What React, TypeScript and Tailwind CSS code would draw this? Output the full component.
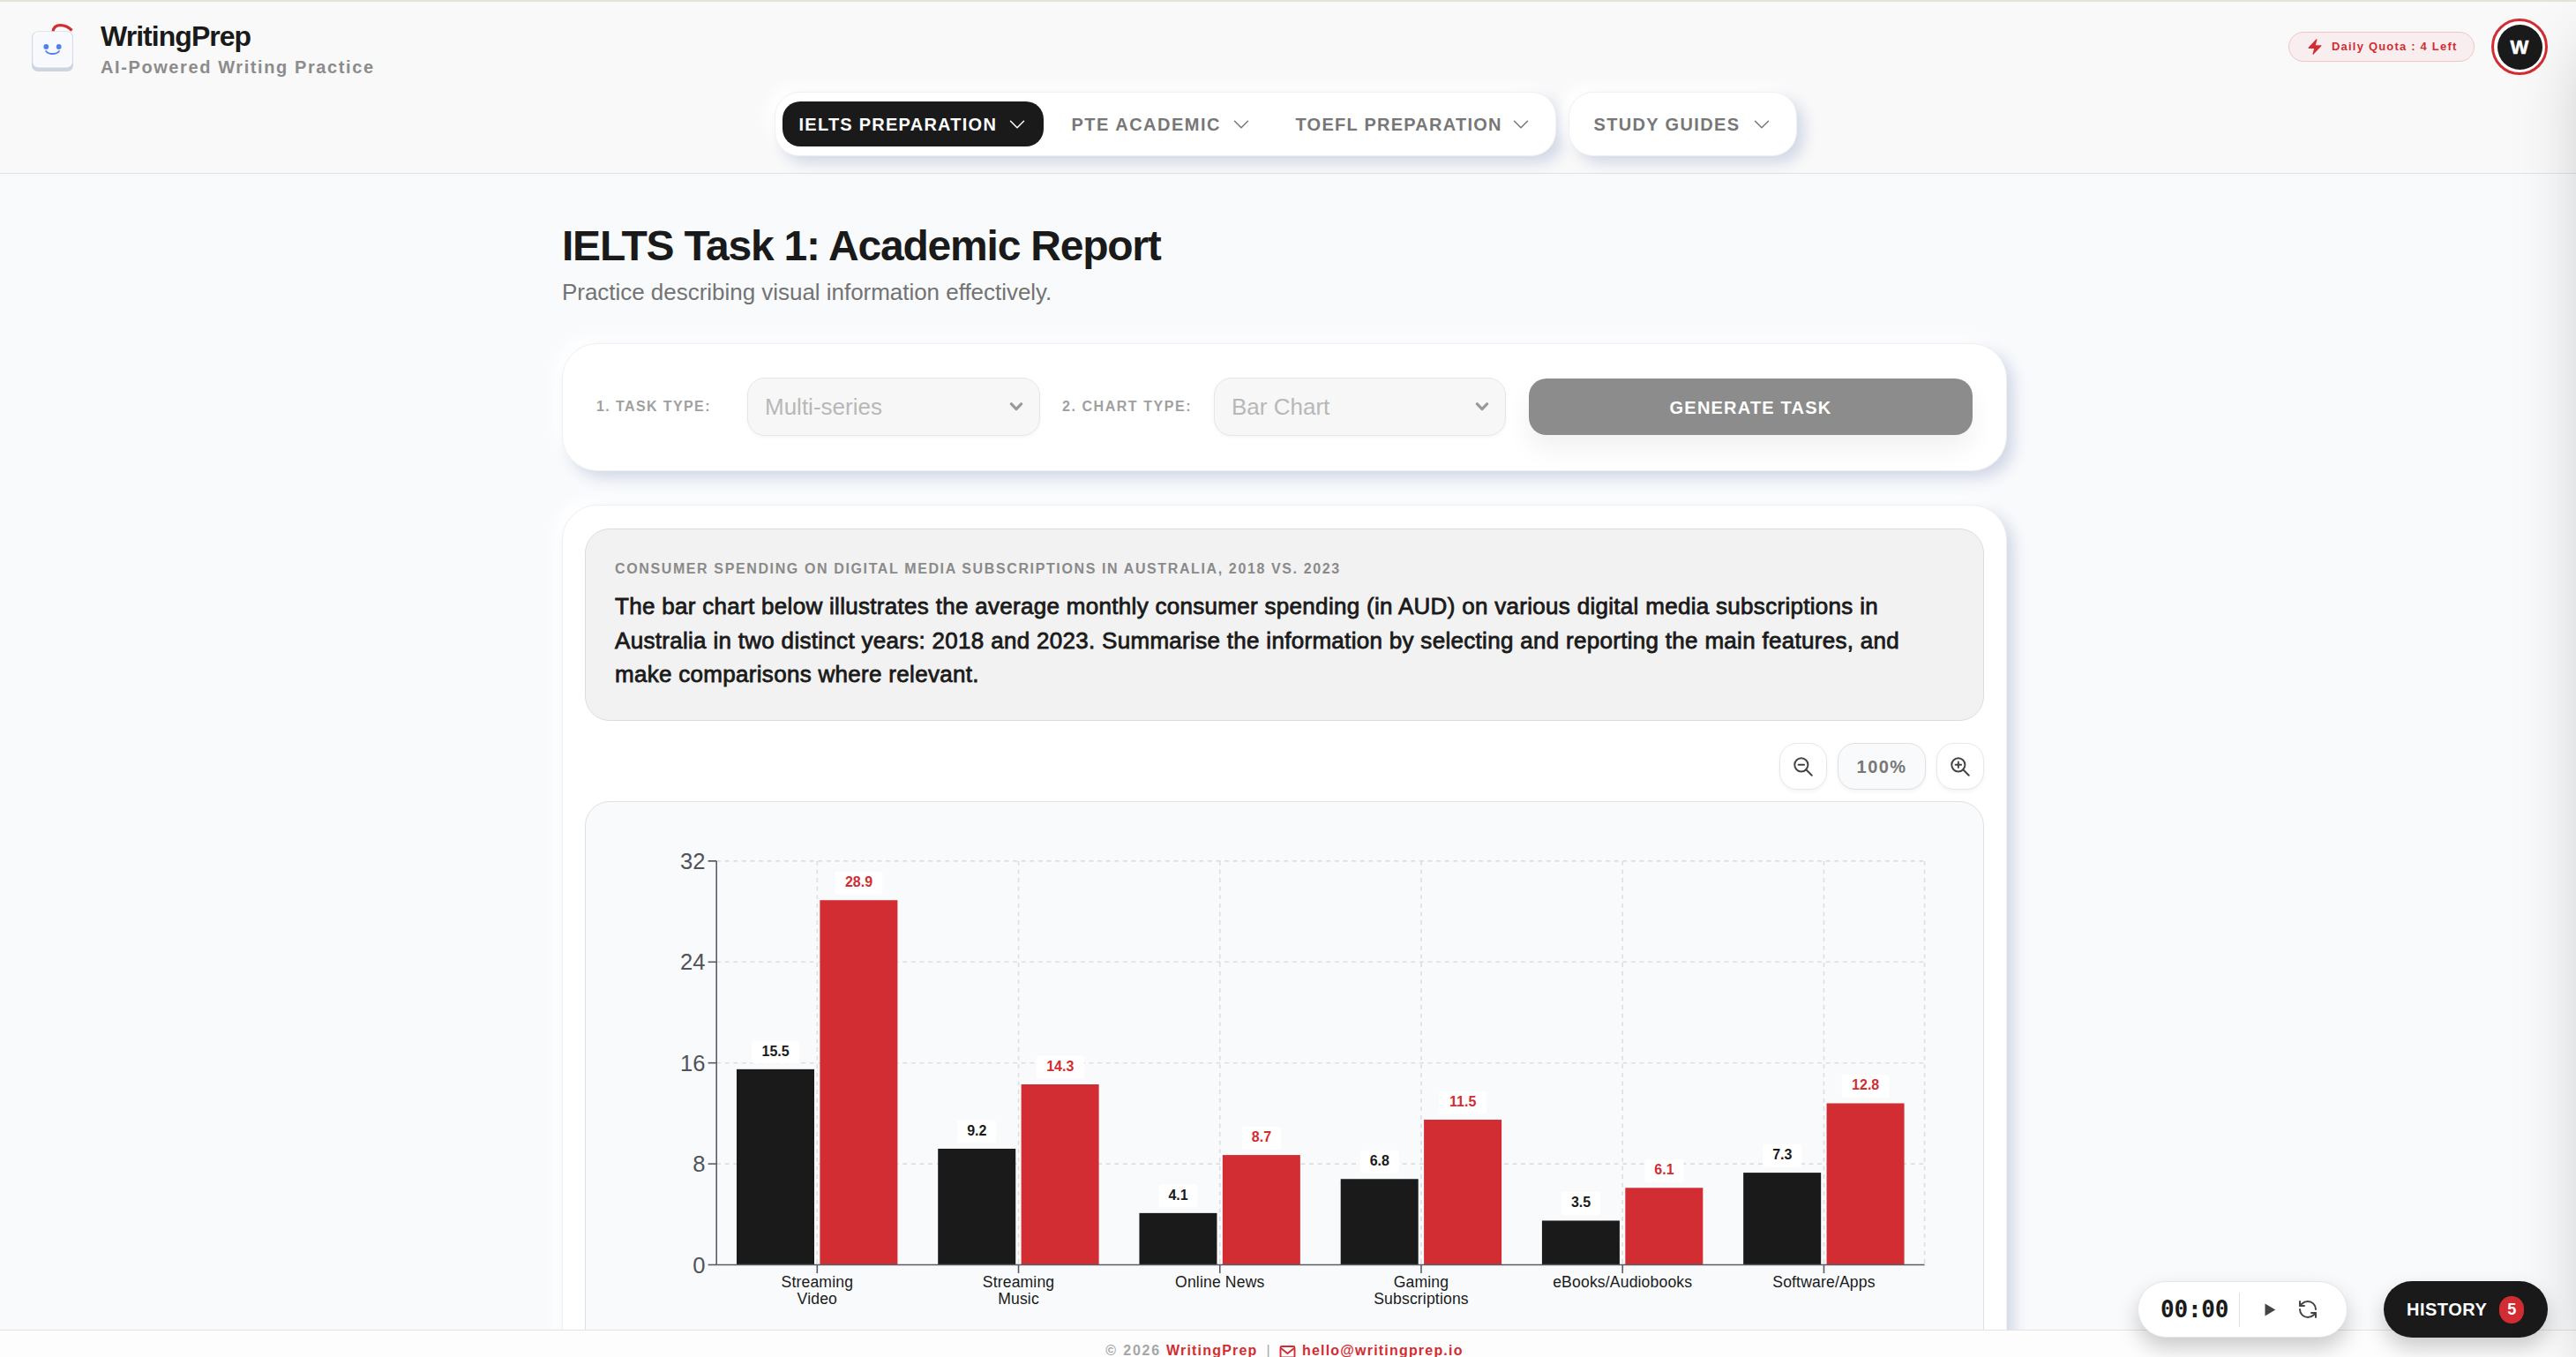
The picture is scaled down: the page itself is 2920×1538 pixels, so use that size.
import { RefreshCcw } from 'lucide-react';
import type { ReactNode } from 'react';

const chartData = [
    { label: ['Streaming', 'Video'], y2018: 15.5, y2023: 28.9 },
    { label: ['Streaming', 'Music'], y2018: 9.2, y2023: 14.3 },
    { label: ['Online News'], y2018: 4.1, y2023: 8.7 },
    { label: ['Gaming', 'Subscriptions'], y2018: 6.8, y2023: 11.5 },
    { label: ['eBooks/Audiobooks'], y2018: 3.5, y2023: 6.1 },
    { label: ['Software/Apps'], y2018: 7.3, y2023: 12.8 },
];

function Logo() {
    return (
        <svg className="mt-[6px] h-[56px] w-[48px]" viewBox="0 0 48 56" fill="none">
            <path d="M24 9C24.5 3.5 28 1.6 32.5 1.6C38 1.6 42 4 45.5 7.5" stroke="#d12d33" strokeWidth="3.2" />
            <rect x="0" y="8.5" width="47" height="45.5" rx="7" fill="#ccd5e0" />
            <rect x="0.5" y="8.5" width="46" height="41" rx="7" fill="#e2e7f0" />
            <rect x="2.4" y="10" width="42.4" height="38.5" rx="5" fill="#f8f9fd" stroke="#fdfdff" strokeWidth="1.5" />
            <circle cx="16.3" cy="26" r="2.9" fill="#4f80ee" />
            <circle cx="30.7" cy="26" r="2.9" fill="#4f80ee" />
            <path d="M16.2 31C19 35 28 35 31 31" stroke="#4f80ee" strokeWidth="1.8" strokeLinecap="round" />
        </svg>
    );
}

function NavItem({ label, active, className }: { label: string; active?: boolean; className: string }) {
    return (
        <button
            className={`flex h-[51px] items-center justify-between rounded-[20px] pr-[20px] text-[20px] font-bold whitespace-nowrap ${
                active ? 'bg-[#1a1a1a] text-white' : 'text-[#777777]'
            } ${className}`}
        >
            <span className="pt-px">{label}</span>
            <svg className="h-5 w-5 shrink-0" viewBox="0 0 20 20" fill="none" stroke="currentColor">
                <path d="M2.5 6.25L10 13.75L17.5 6.25" strokeWidth="1.5" strokeLinecap="round" strokeLinejoin="round" />
            </svg>
        </button>
    );
}

function NavGroup({ children }: { children: ReactNode }) {
    return (
        <div className="flex h-[73px] items-center gap-3 rounded-[28px] border border-[#f0f0f2] bg-white pr-[9px] pl-2 shadow-[8px_8px_16px_#d2d8e6,-8px_-8px_16px_#ffffff]">
            {children}
        </div>
    );
}

function Select({ value, className }: { value: string; className: string }) {
    return (
        <div
            className={`flex h-[66px] items-center justify-between rounded-[20px] border border-[#e6e6e6] bg-[#f7f7f7] pr-[18px] pl-[19px] text-[26px] text-[#b8b8b8] shadow-[0_2px_4px_rgba(0,0,0,0.04)] ${className}`}
        >
            <span className="pt-px">{value}</span>
            <svg className="h-[10px] w-[16px]" viewBox="0 0 16 10" fill="none">
                <path d="M2.4 1.8L8 7.6L13.6 1.8" stroke="#9a9a9a" strokeWidth="3.2" strokeLinecap="round" strokeLinejoin="round" />
            </svg>
        </div>
    );
}

function ZoomButton({ path }: { path: string }) {
    return (
        <button className="flex h-[53px] w-[54px] items-center justify-center rounded-[20px] border border-[#e8e8e8] bg-white shadow-[0_2px_4px_rgba(0,0,0,0.05)]">
            <svg className="h-[26px] w-[26px]" viewBox="0 0 24 24" fill="none" stroke="#444444" strokeWidth="1.8" strokeLinecap="round" strokeLinejoin="round">
                <circle cx="10" cy="10" r="7" />
                <path d="M21 21l-6-6" />
                <path d={path} />
            </svg>
        </button>
    );
}

function ValueLabel({ x, top, value, color }: { x: number; top: number; value: number; color: string }) {
    const text = value.toFixed(1);
    const width = text.length > 3 ? 54 : 44;
    return (
        <g>
            <rect x={x - width / 2} y={top - 32.4} width={width} height="26" rx="3.2" fill="#ffffff" fillOpacity="0.95" />
            <text x={x} y={top - 15} textAnchor="middle" fontSize="16" fontWeight="700" fill={color}>
                {text}
            </text>
        </g>
    );
}

function SpendingChart() {
    const left = 148.2;
    const bottom = 524.5;
    const band = 228.23;
    const unit = 14.3;
    const right = left + band * chartData.length;
    const top = bottom - 32 * unit;

    return (
        <svg className="block h-[700px] w-[1584px]" viewBox="0 0 1584 700">
            <g stroke="#dcdee1" strokeWidth="1.6" strokeDasharray="4.8 4.8">
                {[8, 16, 24, 32].map((tick) => (
                    <line key={tick} x1={left} x2={right} y1={bottom - tick * unit} y2={bottom - tick * unit} />
                ))}
                {chartData.map((_, i) => (
                    <line key={i} x1={left + band * (i + 0.5)} x2={left + band * (i + 0.5)} y1={top} y2={bottom} />
                ))}
                <line x1={right} x2={right} y1={top} y2={bottom} />
            </g>
            {chartData.map((item, i) => {
                const x = left + band * i + 22.8;
                return (
                    <g key={i}>
                        <rect x={x} y={bottom - item.y2018 * unit} width="88" height={item.y2018 * unit} fill="#1a1a1a" />
                        <rect x={x + 94.4} y={bottom - item.y2023 * unit} width="88" height={item.y2023 * unit} fill="#d12d33" />
                    </g>
                );
            })}
            <g stroke="#5b5d66" strokeWidth="1.6">
                <line x1={left} x2={left} y1={top} y2={bottom} />
                <line x1={left} x2={right} y1={bottom} y2={bottom} />
                {[0, 8, 16, 24, 32].map((tick) => (
                    <line key={tick} x1={left - 9.6} x2={left} y1={bottom - tick * unit} y2={bottom - tick * unit} />
                ))}
                {chartData.map((_, i) => (
                    <line key={i} x1={left + band * (i + 0.5)} x2={left + band * (i + 0.5)} y1={bottom} y2={bottom + 9.6} />
                ))}
            </g>
            {[0, 8, 16, 24, 32].map((tick) => (
                <text key={tick} x={left - 12.8} y={bottom - tick * unit + 9} textAnchor="end" fontSize="25.6" fill="#52525b">
                    {tick}
                </text>
            ))}
            {chartData.map((item, i) => {
                const center = left + band * (i + 0.5);
                return (
                    <g key={i}>
                        <ValueLabel x={center - 47.2} top={bottom - item.y2018 * unit} value={item.y2018} color="#1a1a1a" />
                        <ValueLabel x={center + 47.2} top={bottom - item.y2023 * unit} value={item.y2023} color="#d12d33" />
                        {item.label.map((line, n) => (
                            <text
                                key={line}
                                x={center}
                                y={bottom + 25 + n * 19.2}
                                textAnchor="middle"
                                fontSize="17.6"
                                letterSpacing="0.15"
                                fill="#1a1a1a"
                            >
                                {line}
                            </text>
                        ))}
                    </g>
                );
            })}
        </svg>
    );
}

function Header() {
    return (
        <header className="relative z-10 h-[197px] border-t-2 border-b border-t-[#dfe6d8] border-b-[#e2e2e2] bg-[#f9f9f9]">
            <div className="flex h-[102px] items-start justify-between pt-[19px] pr-8 pl-9">
                <div className="flex items-start">
                    <Logo />
                    <div className="ml-[30px]">
                        <div className="text-[32px] leading-[40px] font-bold tracking-[-0.96px] text-[#1a1a1a]">WritingPrep</div>
                        <div className="mt-px text-[20px] leading-[28px] font-bold tracking-[1.6px] text-[#8c8c8c]">
                            AI-Powered Writing Practice
                        </div>
                    </div>
                </div>
                <div className="flex items-center gap-[19px]">
                    <div className="flex h-[34px] w-[211px] items-center rounded-full border border-[#f0c6c9] bg-[#f8eeef] pl-[19px] text-[#d12d33]">
                        <svg className="h-[20px] w-[20px]" viewBox="0 0 24 24" fill="currentColor">
                            <path d="M14.615 1.595a.75.75 0 0 1 .359.852L12.982 9.75h7.268a.75.75 0 0 1 .548 1.262l-10.5 11.25a.75.75 0 0 1-1.272-.71l1.992-7.302H3.75a.75.75 0 0 1-.548-1.262l10.5-11.25a.75.75 0 0 1 .913-.143Z" />
                        </svg>
                        <span className="ml-[9px] text-[13px] font-bold tracking-[1.2px] whitespace-nowrap">Daily Quota : 4 Left</span>
                    </div>
                    <div className="flex h-16 w-16 items-center justify-center rounded-full border-[3px] border-[#d12d33] bg-white">
                        <div className="flex h-[51px] w-[51px] items-center justify-center rounded-full bg-[#1a1a1a] text-[22px] font-bold text-white [-webkit-text-stroke:0.6px_#ffffff]">
                            W
                        </div>
                    </div>
                </div>
            </div>
            <nav className="flex justify-center gap-[14px] pr-[6px]">
                <NavGroup>
                    <NavItem label="IELTS PREPARATION" active className="w-[296px] pl-[19px] tracking-[1.25px]" />
                    <NavItem label="PTE ACADEMIC" className="w-[242px] pl-[20px] tracking-[1.5px]" />
                    <NavItem label="TOEFL PREPARATION" className="w-[305px] pl-[20px] tracking-[1.25px]" />
                </NavGroup>
                <NavGroup>
                    <NavItem label="STUDY GUIDES" className="w-[240px] pl-[20px] tracking-[1.35px]" />
                </NavGroup>
            </nav>
        </header>
    );
}

export default function App() {
    return (
        <div className="relative h-[1538px] w-[2920px] overflow-hidden bg-[#f8fafc] font-['Liberation_Sans',Arial,sans-serif]">
            <Header />

            <main className="mx-auto w-[1646px] pt-[54px] pr-2">
                <h1 className="text-[48px] leading-[56px] font-bold tracking-[-1.22px] text-[#1a1a1a]">
                    IELTS Task 1: Academic Report
                </h1>
                <p className="mt-[6px] text-[26px] leading-[36px] tracking-[-0.03px] text-[#737373]">
                    Practice describing visual information effectively.
                </p>

                <section className="mt-10 flex h-[145px] items-center rounded-[40px] border border-[#f0f0f3] bg-white px-[38px] pb-px shadow-[8px_8px_16px_#d2d8e6,-8px_-8px_16px_#ffffff]">
                    <span className="w-[171px] text-[16px] font-bold tracking-[1.4px] text-[#a0a0a0]">1. TASK TYPE:</span>
                    <Select value="Multi-series" className="w-[332px]" />
                    <span className="ml-[25px] w-[172px] text-[16px] font-bold tracking-[1.55px] text-[#a0a0a0]">2. CHART TYPE:</span>
                    <Select value="Bar Chart" className="w-[331px]" />
                    <button className="ml-[26px] h-16 flex-1 rounded-[20px] bg-[#8c8c8c] pt-px text-[20px] font-bold tracking-[1.2px] text-white shadow-[0_16px_30px_rgba(0,0,0,0.06)]">
                        GENERATE TASK
                    </button>
                </section>

                <section className="mt-[38px] rounded-[40px] border border-[#f0f0f3] bg-white px-[25px] py-[26px] shadow-[8px_8px_16px_#d2d8e6,-8px_-8px_16px_#ffffff]">
                    <div className="h-[218px] rounded-[28px] border border-[#dcdcdc] bg-[#f2f2f2] px-[33px] pt-[33px]">
                        <h2 className="text-[16px] leading-[24px] font-bold tracking-[1.62px] text-[#8a8a8a] uppercase">
                            Consumer Spending on Digital Media Subscriptions in Australia, 2018 vs. 2023
                        </h2>
                        <p className="mt-[11px] text-[26px] leading-[38.6px] tracking-[0.3px] whitespace-nowrap text-[#1a1a1a] [-webkit-text-stroke:0.8px_#1a1a1a]">
                            The bar chart below illustrates the average monthly consumer spending (in AUD) on various digital media subscriptions in
                            <br />
                            Australia in two distinct years: 2018 and 2023. Summarise the information by selecting and reporting the main features, and
                            <br />
                            make comparisons where relevant.
                        </p>
                    </div>

                    <div className="mt-[25px] flex justify-end gap-3">
                        <ZoomButton path="M7 10h6" />
                        <div className="flex h-[53px] w-[100px] items-center justify-center rounded-[20px] border border-[#dfe1e4] bg-[#f8fafc] text-[20px] font-bold tracking-[1.4px] text-[#777777] shadow-[0_2px_4px_rgba(0,0,0,0.05)]">
                            100%
                        </div>
                        <ZoomButton path="M7 10h6M10 7v6" />
                    </div>

                    <div className="mt-[13px] overflow-hidden rounded-[28px] border border-[#dfe0e2] bg-[#f8fafc]">
                        <SpendingChart />
                    </div>
                </section>
            </main>

            <footer className="absolute inset-x-0 bottom-0 flex h-[31px] justify-center overflow-hidden border-t border-[#e2e2e4] bg-[#fdfdfd] pr-[8px] text-[16px] leading-[20px] font-bold tracking-[1.2px] text-[#a6a6a6]">
                <div className="flex items-start pt-[13px]">
                    <span className="tracking-[1.8px]">© 2026</span>
                    <span className="ml-[6px] text-[#d12d33]">WritingPrep</span>
                    <span className="ml-[10px] font-normal">|</span>
                    <svg className="mt-[3px] ml-[9px] h-[17px] w-[20px] shrink-0" viewBox="0 0 20 17" fill="none" stroke="#d12d33" strokeWidth="1.9">
                        <rect x="1.5" y="2" width="16" height="12.5" rx="1.5" />
                        <path d="M2 4L9.5 10L17 4" />
                    </svg>
                    <span className="ml-[6px] text-[#d12d33]">hello@writingprep.io</span>
                </div>
            </footer>

            <div className="absolute right-8 bottom-[22px] flex gap-[41px]">
                <div className="flex h-16 w-[238px] items-center rounded-full border border-[#e6e6e6] bg-white pl-[25px] shadow-[0_12px_24px_rgba(0,0,0,0.2)]">
                    <span className="w-[89px] font-['DejaVu_Sans_Mono',monospace] text-[26px] font-bold tracking-[-0.2px] text-[#1a1a1a]">
                        00:00
                    </span>
                    <span className="h-[39px] w-px bg-[#e0e0e0]" />
                    <svg className="ml-[28px] h-[15px] w-[13px]" viewBox="0 0 13 15">
                        <path d="M0.5 0.5L12.3 7.5L0.5 14.5Z" fill="#444444" />
                    </svg>
                    <RefreshCcw className="ml-[24px] h-6 w-6 text-[#444444]" strokeWidth={2} />
                </div>
                <button className="flex h-16 w-[186px] items-center rounded-full bg-[#1a1a1a] pl-[26px] text-[20px] font-bold tracking-[0.5px] text-white shadow-[0_12px_24px_rgba(0,0,0,0.2)]">
                    HISTORY
                    <span className="ml-[14px] flex h-[31px] w-[28px] items-center justify-center rounded-full bg-[#d12d33] text-[18px] tracking-normal">
                        5
                    </span>
                </button>
            </div>

            {/* history drawer, closed: only its shadow reaches the page */}
            <aside className="absolute top-0 left-[2920px] z-20 h-[1538px] w-[800px] bg-white shadow-[0_40px_80px_-19px_rgba(0,0,0,0.25)]" />
        </div>
    );
}
